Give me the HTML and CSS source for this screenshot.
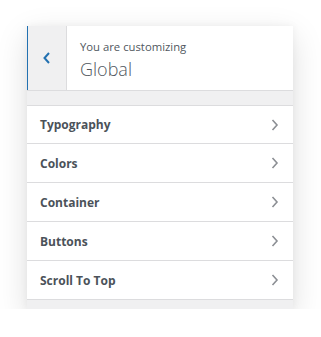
FILE: index.html
```html
<!DOCTYPE html>
<html>
<head>
<meta charset="utf-8">
<link rel="stylesheet" href="styles.css">
</head>
<body>
<div class="panel">
  <div class="header">
    <button class="back" aria-label="Back">
      <svg width="10" height="14" viewBox="0 0 10 14"><path d="M7 2 L2.5 7 L7 12" fill="none" stroke="#2271b1" stroke-width="2"/></svg>
    </button>
    <div class="title">
      <span class="sub">You are customizing</span>
      <span class="name">Global</span>
    </div>
  </div>
  <div class="strip"></div>
  <ul class="list">
    <li class="row"><span>Typography</span><svg class="chev" width="8" height="14" viewBox="0 0 8 14"><path d="M1.5 2 L6 7 L1.5 12" fill="none" stroke="#8c8f94" stroke-width="1.6"/></svg></li>
    <li class="row"><span>Colors</span><svg class="chev" width="8" height="14" viewBox="0 0 8 14"><path d="M1.5 2 L6 7 L1.5 12" fill="none" stroke="#8c8f94" stroke-width="1.6"/></svg></li>
    <li class="row"><span>Container</span><svg class="chev" width="8" height="14" viewBox="0 0 8 14"><path d="M1.5 2 L6 7 L1.5 12" fill="none" stroke="#8c8f94" stroke-width="1.6"/></svg></li>
    <li class="row"><span>Buttons</span><svg class="chev" width="8" height="14" viewBox="0 0 8 14"><path d="M1.5 2 L6 7 L1.5 12" fill="none" stroke="#8c8f94" stroke-width="1.6"/></svg></li>
    <li class="row"><span>Scroll To Top</span><svg class="chev" width="8" height="14" viewBox="0 0 8 14"><path d="M1.5 2 L6 7 L1.5 12" fill="none" stroke="#8c8f94" stroke-width="1.6"/></svg></li>
  </ul>
  <div class="footer"></div>
</div>
</body>
</html>
```
FILE: styles.css
```css
html, body {
  margin: 0;
  padding: 0;
  background: #ffffff;
}
body {
  font-family: "Open Sans", "Noto Sans", sans-serif;
  padding: 26px 0 0 27px;
}
.panel {
  width: 266px;
  background: #f0f0f1;
  box-shadow: 0 10px 30px rgba(0, 0, 0, 0.13), 0 0 8px rgba(0, 0, 0, 0.05);
}
.header {
  display: flex;
  height: 64px;
  background: #ffffff;
  border-bottom: 1px solid #dcdcde;
}
.back {
  width: 40px;
  flex: none;
  border: none;
  border-left: 1px solid #2271b1;
  border-right: 1px solid #dcdcde;
  background: #f0f0f1;
  padding: 0;
  display: flex;
  align-items: center;
  justify-content: center;
}
.title {
  display: flex;
  flex-direction: column;
  padding: 13px 0 0 13px;
}
.sub {
  font-size: 11.3px;
  color: #50575e;
  line-height: 16px;
}
.name {
  font-size: 18px;
  font-weight: 300;
  color: #50575e;
  line-height: 26px;
  margin-top: 1px;
}
.strip {
  height: 14px;
  background: #f0f0f1;
}
.list {
  list-style: none;
  margin: 0;
  padding: 0;
}
.row {
  display: flex;
  align-items: center;
  justify-content: space-between;
  height: 38px;
  background: #ffffff;
  border-top: 1px solid #dcdcde;
  padding: 0 14px 0 13px;
  font-size: 12px;
  font-weight: 700;
  color: #4b5259;
}
.row:first-child {
  height: 37px;
}
.row:last-child {
  border-bottom: 1px solid #dcdcde;
}
.chev {
  display: block;
}
.footer {
  height: 9px;
  background: #f0f0f1;
}
```
